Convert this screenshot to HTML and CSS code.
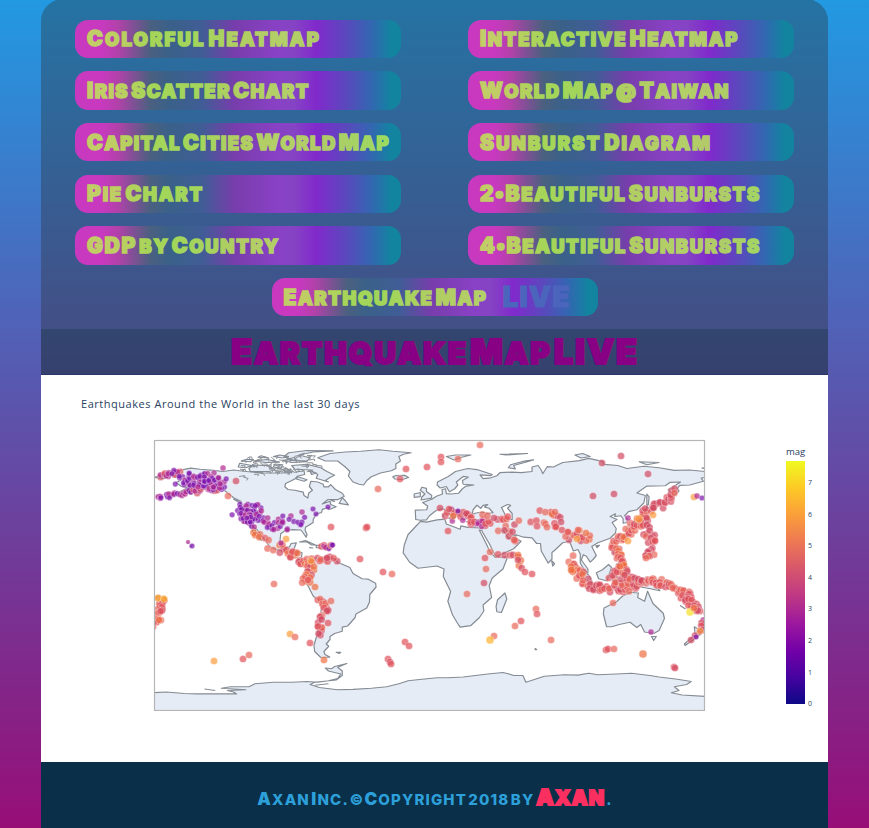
FILE: index.html
```html
<!DOCTYPE html>
<html lang="en">
<head>
<meta charset="utf-8">
<title>Earthquake Map LIVE</title>
<link rel="stylesheet" href="styles.css">
</head>
<body>
<div class="page">
  <nav class="menu">
    <a class="btn"><span class="label" data-width="234"><b>C</b>olorful <b>H</b>eatmap</span></a>
    <a class="btn"><span class="label" data-width="259"><b>I</b>nteractive <b>H</b>eatmap</span></a>
    <a class="btn"><span class="label" data-width="223"><b>I</b>ris <b>S</b>catter <b>C</b>hart</span></a>
    <a class="btn"><span class="label" data-width="250"><b>W</b>orld <b>M</b>ap @ <b>T</b>aiwan</span></a>
    <a class="btn"><span class="label" data-width="303"><b>C</b>apital <b>C</b>ities <b>W</b>orld <b>M</b>ap</span></a>
    <a class="btn"><span class="label" data-width="232"><b>S</b>unburst <b>D</b>iagram</span></a>
    <a class="btn"><span class="label" data-width="117"><b>P</b>ie <b>C</b>hart</span></a>
    <a class="btn"><span class="label" data-width="281"><b>2</b><b>•</b><b>B</b>eautiful <b>S</b>unbursts</span></a>
    <a class="btn"><span class="label" data-width="193"><b>GDP</b> by <b>C</b>ountry</span></a>
    <a class="btn"><span class="label" data-width="281"><b>4</b><b>•</b><b>B</b>eautiful <b>S</b>unbursts</span></a>
    <a class="btn btn-wide"><span class="label" data-width="204"><b>E</b>arthquake <b>M</b>ap</span><span class="live" data-width="68">LIVE</span></a>
  </nav>
  <h1 class="heading"><span data-width="408"><b>E</b>arthquake <b>M</b>ap <b>LIVE</b></span></h1>
  <main class="chart">
    <h2 class="chart-title"><span data-width="279">Earthquakes Around the World in the last 30 days</span></h2>
    <div class="plot">
      <svg class="map" viewBox="153 439 553 272" width="553" height="272">
        <defs><clipPath id="frame"><rect x="154" y="440" width="551" height="270.500"/></clipPath></defs>
        <g clip-path="url(#frame)">
          <g class="land" transform="translate(429.5 575) scale(1.5306 1.5)">
            <path d="M-168-65.600-162-66.500-164-68-166-68.500-161-70.300-156-71.300-150-70.500-141-69.700-135-69-128-70-124-69.500-115-68.500-108-68-101-68-95-68-94-71.500-91-69.500-88-68.500-82-69.500-81.500-67-86-66-88-64-94-61-94.500-58.800-92.500-57-88-56.500-82.500-55.200-82-53-79.500-51.300-79-54.500-76.500-56.500-78.500-59-77.500-62.500-73-62-69.500-60.500-69-58.800-66-58.800-64.500-60.300-61.500-57-57-54.500-55.700-52.500-60-50.200-66.500-50.200-70-47.300-65-49.200-64.500-47-61-45.500-65.800-43.500-66-45-70-43.800-70.500-41.700-74-40.600-76-37-76-35-81-31.800-81.300-30-80-26.800-80.600-25.200-82.500-28-84-30-89.500-30.200-94.500-29.500-97.200-27.500-97.700-22.500-95.800-18.800-91.500-18.600-90.400-21-87-21.400-88.300-18-88.800-15.900-83.300-15-83.700-11-81.500-9-79.500-9.500-77.300-8.500-75.500-10.600-71.500-12.200-71.500-10.700-68-11.500-62-10.700-60-8.500-52-5-50-1-44 2.500-40 2.800-35.200 5.500-34.900 8-39 13-39.200 18-41 22-48 26-48.700 28.500-53.500 34-57 34.800-57 37.500-62 39-65 41-65 43-67.500 46-65.800 47.500-69 51-68.300 53-65.200 54.700-71 55-75 51-75.500 47-73.500 40-71.500 30-70.300 18.500-76 14-79.500 7-81.200 5-80-2-78.500-1.500-77.300-4-77.500-7.500-79.500-8.500-80.200-7.400-83-8.300-85.700-10.500-87.600-13-91.500-14-94.500-16.200-99-16.700-103.500-18.300-105.600-20.500-109.300-25.700-112.800-30.500-114.800-31.700-112.500-27.500-109.500-23-112-24.800-115-28.300-117.200-32.600-120.600-34.600-124.300-40.300-124-46.500-123-49-128-51.500-133.500-56-139-59.700-147-61-151.500-59.200-151-61.200-154-58.500-160-55.700-164.800-54.600-158-58.200-162-59-165.500-61.500-161-64.300Z"/>
            <path d="M-73-78.200-68-76-60-76-55-72-52-69-53-66-50-62-46-60.500-43-60-41-63-38-65.500-32-68-25-69.500-22-71-22-74-19-76-20-79-17-80.500-12-81.500-24-82.500-33-83.500-45-82.500-55-82-65-81Z"/>
            <path d="M-24-65.500-22-66.300-16-66.400-13.700-65-18-63.500-22.500-64Z"/>
            <path d="M-80-73.700-71-71.500-67-69-62-66.500-65-65-68-63-66-62-74-64.500-73-67-78-70-88-70.500-90-73Z"/>
            <path d="M-117-69-105-69-101-70-105-73-115-73.300-118-71Z M-125-72-120-71.500-116-73-124-74.500Z M-102-72-97-71-96-73.500-101-74Z"/>
            <path d="M-90-76.500-80-76-78-78-85-80-76-82-63-82.800-80-83-92-81.500-95-79Z M-96-76.500-90-75-80-75.500-92-77Z M-115-76-107-75-98-75.200-106-77Z M-123-76-117-75.500-115-77-120-77Z M-98-80-92-79-96-78-102-79Z M-112-78.500-105-78-110-79.500Z"/>
            <path d="M-86-65.500-80-63.500-82-62.500-87-64Z M-78-69-74-68-77-67Z M-95-69.500-90-68.500-94-68Z"/>
            <path d="M-59-47.700-53-46.700-55-49.500-57-51.500Z M-64-49.900-62-49.100-64-49.500Z M-128-50.600-123.500-48.400-126-49.300Z"/>
            <path d="M-85-22-81-23-74.500-20-77-20-80-22Z M-74-19.800-70-19.800-68.500-18.500-71-18-74-18.300Z M-78.300-18.300-76.200-18ZM-67-18.400-65.700-18.200Z"/>
            <path d="M-61 51.500-58 51.500-59 52.300ZM-62-10.700-61-10ZM-156-19-155-20ZM-158-21.500-157-21"/>
            <path d="M-180-65-175-66.500-170-66-173-64.300-180-65Z"/>
            <path d="M-5.900-35.800-2-35.200 5-36.800 10-37.300 11-34 15.300-32.300 20-30.500 20.500-32.700 25-31.700 31-31.500 34.300-31.200 36-36.600 31-36.700 27.500-37 26.500-40 29-41 34-42 38-41 41.500-41.500 39-44.500 36-45.300 38-47 35-46.400 33.500-44.500 31-46.500 28.500-43.500 28-41.200 23.500-40.500 24-37.500 22-36.800 20-39.500 19.500-41.800 15-44.500 12.300-45.300 13.800-43.300 18.300-40.200 16-38 12-41.800 9-44.200 5-43.300 3-42 0-39.500-2-36.800-6-36.500-9-37-9.300-43.200-1.800-43.500-1.200-46-4.500-48.300 1.500-50.500 4.500-52.500 8.500-54 8.200-57 10.500-57.500 11-54.200 14-54 19-54.500 21.500-57.500 24-59.300 29-60 22-60.500 21.500-63 25.300-65.200 22-65.700 17.500-62 18.500-60 16.500-57.500 13-55.500 11-59 7-58 5-60 5.200-62 12-65.500 17-69 25-71 31-70.300 41-67 40-66.300 33-66.700 35-64.300 40-64.800 44-66.200 46-68.200 54-68.600 60-68.300 67-69 67-72 71-73 73-70 74-67.500 77-72.300 81-72 87-75 98-76.200 104-77.700 113-75.700 114-73.700 123-73 129-71 140-72.500 150-71.500 160-69.700 170-70 180-69V-65L177.500-64.600 179-62.500 170-60 163.500-59.800 162-57.800 163-56 160-53 156.700-51 156-57 161-60 164-62 157-61.700 154-59.500 142-59.300 135.500-54.700 141-53 140-48 135.500-43.500 130-42.300 127.500-39.500 129.300-37 129-35 126.500-34.500 126.500-37.500 125-39.500 121-39 121.500-40.800 118-39 122.500-37 119.300-35 122-31 121.500-28 118-24.500 110-21.500 106-19 109-13 107-10.500 105-8.600 102.500-12.500 100.500-13.500 99.200-10 103.500-4 103.500-1.300 101.300-3 98.500-8 98.500-14 97-17 94-16 91.500-22.500 87-21.500 82-16.700 80-15 80-10.500 77.500-8 73-16 72.500-21 70-21 67-24.800 61.500-25.200 57-26.700 54-26.600 50-30 48-30 51.500-25 51.500-24.200 56.300-26.200 56.500-24.500 59.800-22.500 55-17.500 45-12.800 43-13 39-21 35-28 34.300-29.500 32.500-30 37-21 39.500-15.500 43-11.700 51-12 48-4 41 2 39 7 40.600 15 35 20 35.500 24 32.500 28.500 27 33.700 20 34.800 18.200 32 15 26.500 12 17.500 13.800 11 9 1 9.500-4 5-6-7.500-4.500-13-8.500-17.200-14.700-16.500-20-14-27-9.800-31.500Z"/>
            <path d="M-5.500-50 1.300-51.200 1.500-53-2-55.700-2-57.700-5-58.500-6-56.500-3-54-5-52Z M-10-51.800-6-52.300-6-55-10-54Z"/>
            <path d="M49.300 12 50.500 16 47 25 44 24.500 43.500 21 44.500 16.500Z M79.800-9.500 81.700-7.500 80.500-6Z M8.500-41 9.600-40 9-39ZM12.500-38 15.500-38 15-36.800Z M24-35.500 26-35.200ZM32.500-35 34-35.300Z"/>
            <path class="sea" d="M47-45 51-47 53-46.500 51-44.500 54-41 54-37 49.500-37.500 49.300-40.500Z"/>
            <path d="M51.500-71.500 56-70.800 55-73 68-76.700 62-76 53-73.500Z M11-79 17-80 27-80 21-78.500 16-76.700Z M46-80.500 64-81 50-80Z M95-80 100-81 105-79 99-78Z M137-75.500 150-75 142-73.500Z M178-71.300 180-71V-71.500Z"/>
            <path d="M142-54 143.500-52 143-47 142-46Z M140.500-41.500 145.500-43.300 142-45.500Z M130-33 135-35.500 140-37.500 141-41.300 142-39.500 140.700-35.500 136-33.500 131-31.300Z M120.200-23.500 121.500-25.200 120.800-22Z M108.700-19.500 111-19.800 109.500-18.300Z"/>
            <path d="M95.500-5.500 104 0 106 3.500 105.500 5.800 100 1Z M105.500 6.800 114 7.500 115 8.700 107 7.700Z M109-1.500 113-3.500 117-7 119-5 117.500-1 116 4 110.500 2.500Z M120 0 125-1.500 121-.5 123 1 122 5 120.500 3 119.500 5Z M120.500-18.500 122-17 124-12.500 120.500-14Z M122-7 125.500-9.500 126-6Z M131 1 134 1 138 2 146 5 150.500 10.500 143.500 9 138 8 133 4Z M117 8.500 125 8.300 119 9.500Z M148 6 152 4.500 149 6.500Z"/>
            <path d="M114 22 113.600 26 115.700 34.500 119 34.500 124 33 131 31.500 135.500 35 138 33 140.500 38 146.500 39 150 37 153.500 29 152.700 25.500 146 19 142.500 10.800 140.500 17.500 136 15 136.500 12 131 11.500 126 14.200 122 18Z M145 41 148.200 41 146.500 43.700Z M173 34.500 178.500 37.800 175 41.500 173.500 39Z M172.500 40.700 174 42 167 47 166.500 46Z M164 20.500 167 22.500Z"/>
            <path d="M69 49 70 49.700 69 49.700ZM-147 76-140 77M-102 73.500-94 73M-75 73.500-66 72.500"/>
            <path d="M-182 78.500-172 78-160 79-152 79.300-126 79.300-128 78-132 77-120 76.500-136 75.500-130 74.500-118 74.500-114 72.500-102 71.500-90 71.500-80 71-73 71.500-66 70.500-60 69-58 66-66 64-68 62-64 62.500-62 61-54 59-60 61.500-57 64-57 67-61 70-75 71.500-78 73-72 75-60 76.500-50 76.300-38 75.500-28 74.500-20 72.500-14 70.500-5 69.500 5 68.500 12 68.500 22 68 30 67 38 66 48 65 52 66 55 67 61 67 63 71.500 69 69.500 75 67.500 88 66.500 97 66.800 104 65.500 110 66.500 122 66 132 65.500 144 67 150 68 162 69.500 171 71 168 73 160 74.500 163 77 158 78.500 165 80 182 81V92H-182Z"/>
          </g>
          <g class="quakes" id="quakes"></g>
        </g>
        <rect class="frame" x="154.500" y="440.500" width="550" height="270"/>
      </svg>
      <aside class="legend">
        <div class="legend-title">mag</div>
        <div class="legend-body">
          <div class="bar"></div>
          <ol class="ticks"><li>7</li><li>6</li><li>5</li><li>4</li><li>3</li><li>2</li><li>1</li><li>0</li></ol>
        </div>
      </aside>
    </div>
  </main>
  <footer class="footer"><span class="copy" data-width="277"><b>A</b>xan <b>I</b>nc. ©<b>C</b>opyright 2018 by</span><span class="brand" data-width="69"><b>A</b>xan</span><span class="copy">.</span></footer>
</div>
<script src="app.js"></script>
</body>
</html>
```
FILE: styles.css
```css
* { box-sizing: border-box; }
html { height: 100%; }
body {
  margin: 0;
  height: 828px;
  overflow: hidden;
  background: linear-gradient(#2299e2, #5f50a9 52%, #970e77);
  font-family: Inter, "Liberation Sans", sans-serif;
}
.page {
  width: 787px;
  height: 829px;
  margin: -1px 0 0 41px;
  border-radius: 22px 22px 0 0;
  overflow: hidden;
  display: flex;
  flex-direction: column;
}
.menu {
  flex: 0 0 330px;
  display: grid;
  grid-template-columns: 326px 326px;
  grid-auto-rows: 38.500px;
  gap: 13.200px 67px;
  padding: 20.500px 34px 0;
  background: rgba(43, 46, 46, .35);
}
.btn {
  display: flex;
  align-items: center;
  padding-left: 12px;
  border-radius: 13px;
  white-space: nowrap;
  background: linear-gradient(90deg, #c839c0 0 8%, #b341aa 13%, #4b6080 23%, #3a6189 29%, #405d96 39%, #783dac 49%, #8941c5 62%, #8544c4 67%, #8129cc 74%, #5b48bd 83%, #3267b1 91%, #1284a0 97%);
}
.btn-wide { grid-column: 1 / -1; justify-self: center; width: 326px; }
.label {
  display: block;
  padding-top: 1px;
  font-size: 18.500px;
  line-height: 38px;
  font-weight: 900;
  text-transform: uppercase;
  word-spacing: -3px;
  color: #c0f74d;
  opacity: .78;
  -webkit-text-stroke: 1.500px #c0f74d;
}
b { font-weight: 900; font-size: 1.140em; line-height: 1; }
.live { margin-left: 15px; font-size: 28px; line-height: 34px; padding-bottom: 1px; font-weight: 900; color: #4b65bd; -webkit-text-stroke: 1px #4b65bd; }
.heading {
  flex: 0 0 46px;
  min-height: 0;
  margin: 0;
  padding-left: 1px;
  text-align: center;
  font-size: 30px;
  line-height: 48px;
  font-weight: 900;
  text-transform: uppercase;
  word-spacing: -6px;
  white-space: nowrap;
  color: #880083;
  -webkit-text-stroke: 2px #880083;
  background: linear-gradient(#32466f, #36406f);
  border-bottom: 1px solid #293568;
}
.chart { flex: 0 0 387px; background: #fff; }
.chart-title {
  margin: 0;
  padding: 20px 0 0 40px;
  height: 64px;
  font: 400 11px/17px "Open Sans", sans-serif;
  color: #2a3f5f;
  white-space: nowrap;
}
.plot { display: flex; align-items: flex-start; padding-left: 112px; }
.map { display: block; }
.land path { fill: #e5ecf6; stroke: #858b93; stroke-width: 1.200px; stroke-linejoin: round; vector-effect: non-scaling-stroke; }
.land .sea { fill: #fff; }
.quakes circle { stroke: #fff; stroke-width: .5px; fill-opacity: .7; stroke-opacity: .65; }
.frame { fill: none; stroke: #b5b5b5; stroke-width: 1.200px; }
.legend { margin: 5px 0 0 80px; font-family: "Open Sans", sans-serif; color: #2a3f5f; }
.legend-title { font-size: 9.500px; line-height: 15px; height: 17px; }
.legend-body { display: flex; }
.bar { width: 19px; height: 243px; background: linear-gradient(#f0f921, #fdca26 11%, #fb9f3a 22%, #ed7953 33%, #d8576b 44%, #bd3786 56%, #9c179e 67%, #7201a8 78%, #46039f 89%, #0d0887); }
.ticks { list-style: none; margin: 16px 0 0 3px; padding: 0; font-size: 7px; line-height: 12px; }
.ticks li { height: 31.600px; }
.footer {
  flex: 1;
  display: flex;
  justify-content: center;
  align-items: baseline;
  padding-top: 21px;
  line-height: 30px;
  background: #0a2f49;
  text-transform: uppercase;
  white-space: nowrap;
  font-weight: 900;
}
.copy { font-size: 15px; font-weight: 800; word-spacing: -3px; color: #2da0da; }
.brand { margin: 0 1px 0 2px; font-size: 20px; color: #fb2f60; -webkit-text-stroke: 1.800px #fb2f60; }
.brand b { font-size: 22px; }
```
FILE: app.js
```js
// Track each label out to its own width.
document.querySelectorAll('[data-width]').forEach(el => {
  el.style.display = 'inline-block';
  const n = el.textContent.length;
  const w = el.getBoundingClientRect().width;
  el.style.letterSpacing = (el.dataset.width - w) / n + 'px';
});

const layer = document.getElementById('quakes');
const PLASMA = { p: '#7d12ac', m: '#b02a92', k: '#d1495f', r: '#e05058', s: '#e8665a', o: '#ee6c3e', a: '#fb9b3c', g: '#fbb02a', y: '#f5de25' };
function dot(x, y, key, r) {
  const c = document.createElementNS('http://www.w3.org/2000/svg', 'circle');
  c.setAttribute('cx', x);
  c.setAttribute('cy', y);
  c.setAttribute('r', r || (key === 'p' ? 2.8 : key === 'm' ? 3 : 3.6));
  c.setAttribute('fill', PLASMA[key]);
  layer.appendChild(c);
}
let seed = 7;
function rnd() { seed = (seed * 16807) % 2147483647; return seed / 2147483647; }

// Belts follow a line: [count, spread, colours, x1, y1, x2, y2, ...]
const belts = [
  [46, 2.5, 'pmpmk', 156, 498, 180, 494, 205, 489, 224, 487],
  [14, 2, 'mkmr', 160, 476, 180, 473],
  [44, 7, 'ppmp', 174, 477, 198, 480, 220, 479],
  [38, 8, 'ppmp', 195, 481, 220, 482],
  [54, 9, 'ppmp', 240, 511, 252, 514, 258, 513],
  [24, 6, 'pmpp', 244, 514, 252, 524],
  [20, 6, 'pmmp', 262, 522, 288, 526],
  [12, 5, 'pmp', 278, 519, 308, 521],
  [7, 3, 'sro', 254, 530, 270, 547],
  [26, 5, 'rsko', 276, 546, 296, 556, 312, 566],
  [12, 4, 'rsk', 310, 562, 337, 558],
  [9, 2, 'pmsr', 320, 547, 333, 547],
  [18, 4, 'rsko', 312, 564, 306, 584],
  [24, 4, 'rskk', 318, 598, 327, 608, 321, 622, 317, 634],
  [28, 4, 'rkss', 163, 599, 160, 610, 155, 625],
  [28, 6, 'rkrm', 448, 514, 470, 520, 488, 522],
  [10, 5, 'rks', 480, 518, 518, 522],
  [9, 5, 'rks', 500, 524, 520, 540],
  [16, 8, 'rkrs', 538, 516, 558, 526],
  [13, 6, 'kros', 565, 537, 591, 536],
  [8, 3, 'rok', 500, 557, 515, 556, 525, 568],
  [24, 5, 'rkso', 571, 558, 576, 571, 588, 584],
  [38, 4, 'rkks', 588, 585, 605, 589, 624, 588, 636, 584],
  [32, 7, 'rskr', 613, 573, 625, 581, 637, 586],
  [32, 4, 'rkso', 614, 545, 620, 558, 624, 574],
  [34, 4, 'rkso', 616, 541, 628, 531, 643, 520],
  [32, 4, 'rkks', 643, 521, 648, 511, 665, 501, 677, 491],
  [28, 4, 'rkks', 643, 519, 648, 533, 654, 545, 648, 555],
  [46, 3, 'rkss', 636, 580, 655, 581, 672, 587, 688, 594],
  [26, 5, 'rkkr', 685, 594, 690, 603, 704, 612],
  [8, 3, 'rkm', 703, 617, 704, 628, 692, 638]
];
for (const [count, spread, keys, ...pts] of belts) {
  const segs = pts.length / 2 - 1;
  for (let i = 0; i < count; i++) {
    const t = (i + rnd() * 0.8) / count * segs;
    const s = Math.min(segs - 1, Math.floor(t)), f = t - s, k = s * 2;
    const x = pts[k] + (pts[k + 2] - pts[k]) * f + (rnd() - 0.5) * spread * 2;
    const y = pts[k + 1] + (pts[k + 3] - pts[k + 1]) * f + (rnd() - 0.5) * spread * 2;
    dot(x.toFixed(1), y.toFixed(1), keys[Math.floor(rnd() * keys.length)]);
  }
}
// Isolated events
`236 481 k;223 468 m;228 496 s;192 546 p;188 542 m 2.3;328 507 p;313 509 p;316 514 p;302 512 m;
331 527 r;366 528 r;367 527 r;378 489 s;406 469 r;400 479 r;427 467 r;441 457 r;441 462 r;458 459 s;480 445 s;
360 559 r;383 572 r;392 574 s;274 584 s;315 587 o;308 580 r;327 558 k;311 561 a;331 601 s;328 623 r;
290 634 a;295 637 s;310 643 r;324 660 o;214 661 a;243 659 r;249 655 s;405 642 r;409 646 r;388 659 r;390 662 k;391 664 r;
158 598 g;164 599 g;159 620 o;467 594 s;484 583 k;494 636 s;490 640 g 4;515 626 s;521 621 r;536 609 s;537 614 r;551 640 s;
606 650 r;608 649 r;614 649 s;643 654 o 4;674 667 r;675 668 k;613 603 s;651 632 m;653 515 a;639 519 a 4;
602 463 k;621 456 k;648 474 k;593 496 k;614 494 k;628 518 m;694 497 a;697 496 m;702 498 p;486 569 s;485 558 r;490 552 s;
525 572 r;532 574 r;518 555 o;518 560 k;458 511 p;453 516 o;494 518 k;449 509 r;440 508 k;552 514 o;555 512 s;561 522 k;
562 530 r;568 532 r;578 530 s;586 533 o;628 541 a;690 612 y 4;694 608 o;700 631 a;696 637 p;691 640 k;
286 539 a;281 543 m;448 531 r;577 539 a;649 556 s;646 558 s`.split(';').forEach(s => {
  const [x, y, key, r] = s.trim().split(' ');
  dot(+x, +y, key, r);
});
// Jagged islands of the Arctic shore
const arctic = document.createElementNS('http://www.w3.org/2000/svg', 'path');
let d = '';
for (let i = 0; i < 75; i++) {
  const x = 238 + rnd() * 78, y = 455 + rnd() * 20 + Math.max(0, (250 - x) / 2);
  d += `M${x.toFixed(1)} ${y.toFixed(1)}l${(2 + rnd() * 4).toFixed(1)} ${(rnd() * 4 - 2).toFixed(1)} ${(rnd() * 3 - 2).toFixed(1)} 2`;
}
arctic.setAttribute('d', d);
arctic.setAttribute('fill', 'none');
arctic.setAttribute('stroke', '#8b9097');
layer.parentNode.insertBefore(arctic, layer);
```
